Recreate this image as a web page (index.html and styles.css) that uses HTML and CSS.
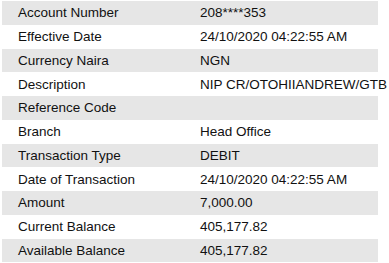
FILE: index.html
```html
<!DOCTYPE html>
<html>
<head>
<meta charset="utf-8">
<link rel="stylesheet" href="styles.css">
</head>
<body>
<div class="table">
  <div class="row"><div class="label">Account Number</div><div class="value">208****353</div></div>
  <div class="row"><div class="label">Effective Date</div><div class="value">24/10/2020 04:22:55 AM</div></div>
  <div class="row"><div class="label">Currency Naira</div><div class="value">NGN</div></div>
  <div class="row"><div class="label">Description</div><div class="value">NIP CR/OTOHIIANDREW/GTB</div></div>
  <div class="row"><div class="label">Reference Code</div><div class="value"></div></div>
  <div class="row"><div class="label">Branch</div><div class="value">Head Office</div></div>
  <div class="row"><div class="label">Transaction Type</div><div class="value">DEBIT</div></div>
  <div class="row"><div class="label">Date of Transaction</div><div class="value">24/10/2020 04:22:55 AM</div></div>
  <div class="row"><div class="label">Amount</div><div class="value">7,000.00</div></div>
  <div class="row"><div class="label">Current Balance</div><div class="value">405,177.82</div></div>
  <div class="row"><div class="label">Available Balance</div><div class="value">405,177.82</div></div>
</div>
</body>
</html>
```
FILE: styles.css
```css
html, body {
  margin: 0;
  padding: 0;
  background: #ffffff;
}
body {
  font-family: "Liberation Sans", Arial, sans-serif;
  font-size: 13.5px;
  color: #111111;
}
.table {
  display: flex;
  flex-direction: column;
  margin: 1px 11px 0 2px;
}
.row {
  display: grid;
  grid-template-columns: 198px 1fr;
  height: 23.75px;
  align-items: center;
}
.row:nth-child(odd) {
  background: #e6e6e6;
}
.label {
  padding-left: 16px;
  white-space: nowrap;
}
.value {
  white-space: nowrap;
  min-width: 0;
}
```
